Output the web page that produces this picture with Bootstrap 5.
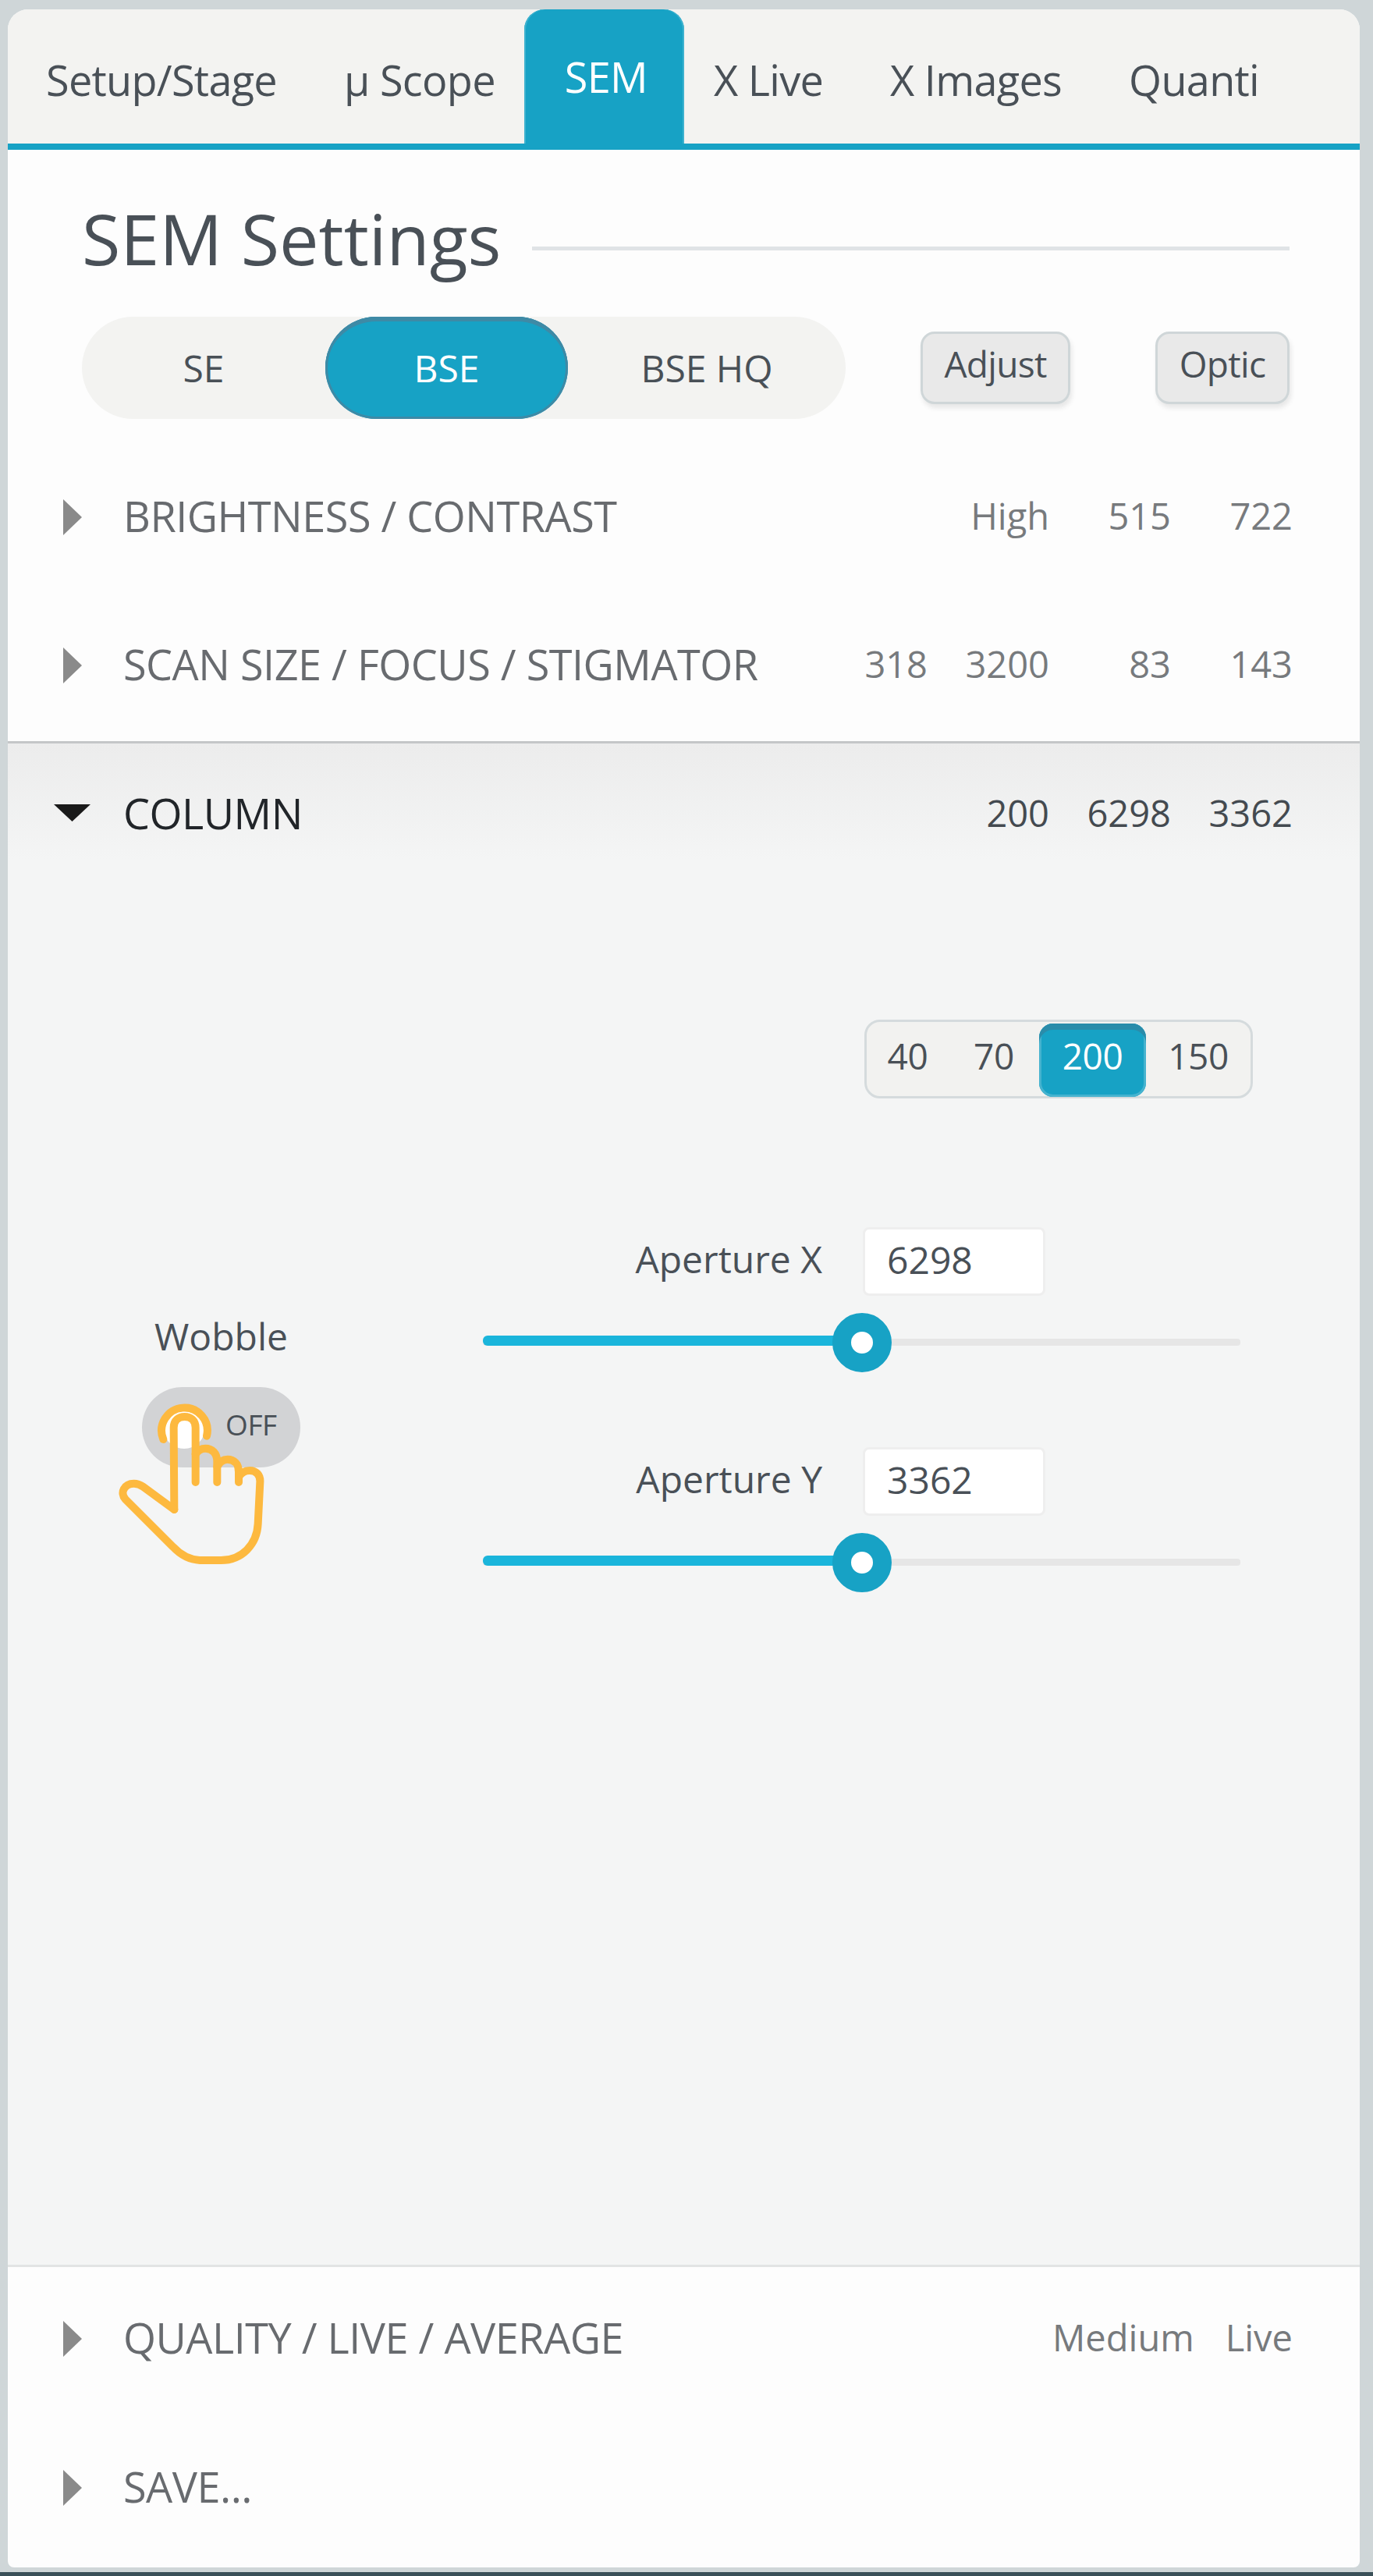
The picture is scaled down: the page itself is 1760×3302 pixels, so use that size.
<!DOCTYPE html>
<html lang="en">
<head>
    <meta charset="UTF-8">
    <title>SEM Settings</title>
    <link rel="stylesheet" href="https://cdn.jsdelivr.net/npm/bootstrap@5.3.0/dist/css/bootstrap.min.css">
    <style>
        body {
            background: #cfd6d8;
            font-family: "Open Sans", "Noto Sans", sans-serif;
            color: #495057;
            height: 3302px;
            overflow: hidden;
        }

        .sem-panel {
            margin: 12px 17px 0 10px;
            height: 3279px;
            background: #fdfdfd;
            border-radius: 26px 26px 8px 8px;
            overflow: hidden;
        }

        .bottom-band { height: 5px; margin-top: 6px; background: #3a5058; }

        /* tabs */
        .sem-tabs {
            height: 180px;
            padding-left: 6px;
            background: #f3f3f1;
            border-bottom: 8px solid #17a2c5;
            flex-wrap: nowrap;
            --bs-nav-tabs-border-width: 0;
        }
        .sem-tabs .nav-link {
            height: 172px;
            padding: 0 43px;
            margin: 0;
            border: 0;
            border-radius: 26px 26px 0 0;
            font-size: 54px;
            letter-spacing: -.7px;
            line-height: 172px;
            color: #495057;
            background: transparent;
            white-space: nowrap;
        }
        .sem-tabs .nav-link span { position: relative; top: 4px; }
        .sem-tabs .nav-link.active {
            color: #fff;
            background: #17a2c5;
            padding: 0 47px 0 52px;
            margin: 0 -5px 0 -6px;
            box-shadow: inset 2px 0 0 #3eb2cf, inset -2px 0 0 #3eb2cf;
        }
        .sem-tabs .nav-link.active span { top: 0; }

        /* title */
        .title-line { height: 214px; padding: 12px 90px 0 95px; }
        .title-line h2 {
            margin: 0;
            font-size: 90px;
            font-weight: 400;
            line-height: 1;
            color: #495057;
        }
        .title-rule { height: 5px; margin: 26px 0 0 40px; background: #e0e3e6; }

        /* SE / BSE pill */
        .mode-wrap { height: 131px; padding: 0 90px 0 95px; }
        .mode-pill {
            width: 979px;
            height: 131px;
            background: #f3f3f1;
            border-radius: 66px;
        }
        .mode-pill .btn {
            border: 0;
            border-radius: 66px;
            padding: 0;
            font-size: 48px;
            color: #495057;
            background: transparent;
        }
        .mode-pill .btn:nth-child(1) { width: 312px; }
        .mode-pill .btn:nth-child(2) { width: 311px; }
        .mode-pill .btn:nth-child(3) { width: 356px; }
        .mode-pill .btn.active {
            color: #fff;
            background: #17a2c5;
            box-shadow: inset 0 6px 0 #3e8aa6, inset 0 0 0 3px #3e8aa6;
        }
        .soft-btn {
            height: 93px;
            padding: 0 0 10px;
            background: #e9e9e9;
            border: 3px solid #cfd6d8;
            border-radius: 18px;
            font-size: 46px;
            letter-spacing: -.7px;
            color: #495057;
            box-shadow: 2px 5px 6px rgba(0, 0, 0, .09);
        }
        .soft-btn:first-of-type { width: 192px; margin-left: 96px; }
        .soft-btn:last-of-type { width: 172px; margin-left: auto; }

        /* accordion rows */
        .acc-row { height: 190px; padding: 0 86px 0 0; font-size: 54px; color: #686b6f; letter-spacing: -.5px; }
        .acc-row.first-row { margin-top: 29px; }
        .acc-row.tight-row { height: 186px; padding-bottom: 6px; }
        .acc-row.open-row { height: 178px; color: #212529; }
        .acc-caret { width: 148px; flex: none; padding: 4px 0 0 71px; }
        .open-row .acc-caret { padding: 0 0 0 59px; }
        .acc-caret svg { display: block; }
        .acc-vals { margin-left: auto; font-size: 47px; letter-spacing: 0; color: #777a7d; }
        .acc-vals span { width: 156px; text-align: right; }
        .acc-vals span:first-child { width: auto; }
        .open-row .acc-vals { color: #444a50; }
        .acc-vals.loose span { width: auto; margin-left: 40px; }

        /* open section */
        .column-section {
            height: 1956px;
            margin-top: 4px;
            border-top: 3px solid #c4c6c8;
            border-bottom: 3px solid #e2e4e4;
            background: linear-gradient(#ececec, #f4f5f5 150px);
        }
        .kv-group {
            width: 498px;
            height: 101px;
            margin: 176px 137px 0 auto;
            padding: 2px 0 0 0;
            background: #f2f2f0;
            border: 3px solid #d5dbdd;
            border-radius: 20px;
        }
        .kv-group .btn {
            flex: none;
            height: 94px;
            margin: 0 !important;
            padding: 0 0 12px;
            border: 0;
            font-size: 46px;
            letter-spacing: -.4px;
            color: #495057;
            background: transparent;
            border-radius: 18px !important;
        }
        .kv-group .btn:nth-child(1) { width: 105px; }
        .kv-group .btn:nth-child(2) { width: 116px; }
        .kv-group .btn:nth-child(3) { width: 137px; }
        .kv-group .btn:nth-child(4) { width: 134px; }
        .kv-group .btn.active {
            color: #fff;
            background: #17a2c5;
            box-shadow: inset 0 8px 0 #2a8caa, inset 0 0 0 3px #46b3cf;
        }

        .wobble-side { width: 203px; margin: 275px 0 0 172px; flex: none; text-align: center; font-size: 48px; line-height: 60px; }
        .wobble-toggle {
            position: relative;
            height: 103px;
            margin-top: 35px;
            background: #d2d3d5;
            border-radius: 52px;
        }
        .wobble-knob {
            width: 54px;
            height: 54px;
            margin: 25px 0 0 27px;
            background: #fff;
            border-radius: 50%;
            flex: none;
        }
        .wobble-off { margin-left: 26px; font-size: 37px; letter-spacing: -.4px; line-height: 95px; }
        .hand-icon { position: absolute; left: -62px; top: -118px; width: 300px; height: 360px; }

        .aperture-side { width: 971px; margin: 0 0 0 234px; padding-top: 165px; flex: none; }
        .aperture-line { height: 88px; font-size: 48px; }
        .aperture-line .form-control {
            width: 234px;
            height: 88px;
            margin-left: 52px;
            padding: 0 28px 6px;
            background: #fff;
            border: 3px solid #eeeeee;
            border-radius: 8px;
            font-size: 48px;
            color: #495057;
        }
        .aperture-label { width: 435px; text-align: right; padding-bottom: 6px; }
        .slide-track {
            position: relative;
            height: 9px;
            margin: 55px 0 130px;
            background: #e6e6e6;
            border-radius: 4px;
        }
        .slide-fill { position: absolute; left: 0; top: -4px; height: 13px; background: #1ab5db; border-radius: 6px 0 0 6px; }
        .slide-thumb {
            position: absolute;
            top: -33px;
            width: 76px;
            height: 76px;
            margin-left: -38px;
            background: #fff;
            border: 24px solid #17a2c5;
            border-radius: 50%;
        }
    </style>
</head>
<body>
    <div class="sem-panel">
        <ul class="nav nav-tabs sem-tabs">
            <li class="nav-item"><a class="nav-link" href="#"><span>Setup/Stage</span></a></li>
            <li class="nav-item"><a class="nav-link" href="#"><span>µ Scope</span></a></li>
            <li class="nav-item"><a class="nav-link active" href="#"><span>SEM</span></a></li>
            <li class="nav-item"><a class="nav-link" href="#"><span>X Live</span></a></li>
            <li class="nav-item"><a class="nav-link" href="#"><span>X Images</span></a></li>
            <li class="nav-item"><a class="nav-link" href="#"><span>Quanti</span></a></li>
        </ul>

        <div class="title-line d-flex align-items-center">
            <h2>SEM Settings</h2>
            <div class="title-rule flex-grow-1"></div>
        </div>

        <div class="mode-wrap d-flex align-items-center">
            <div class="mode-pill d-flex">
                <button class="btn" type="button">SE</button>
                <button class="btn active" type="button">BSE</button>
                <button class="btn" type="button">BSE HQ</button>
            </div>
            <button class="btn soft-btn" type="button">Adjust</button>
            <button class="btn soft-btn" type="button">Optic</button>
        </div>

        <div class="acc-row first-row d-flex align-items-center">
            <div class="acc-caret"><svg width="24" height="46" viewBox="0 0 24 46"><path d="M0 0L24 23L0 46Z" fill="#8a8a8a"/></svg></div>
            <div>BRIGHTNESS / CONTRAST</div>
            <div class="acc-vals d-flex"><span>High</span><span>515</span><span>722</span></div>
        </div>
        <div class="acc-row d-flex align-items-center">
            <div class="acc-caret"><svg width="24" height="46" viewBox="0 0 24 46"><path d="M0 0L24 23L0 46Z" fill="#8a8a8a"/></svg></div>
            <div>SCAN SIZE / FOCUS / STIGMATOR</div>
            <div class="acc-vals d-flex"><span>318</span><span>3200</span><span>83</span><span>143</span></div>
        </div>

        <div class="column-section">
            <div class="acc-row open-row d-flex align-items-center">
                <div class="acc-caret"><svg width="47" height="22" viewBox="0 0 47 22"><path d="M0 0H47L23.500 22Z" fill="#1a1a1a"/></svg></div>
                <div>COLUMN</div>
                <div class="acc-vals d-flex"><span>200</span><span>6298</span><span>3362</span></div>
            </div>

            <div class="btn-group kv-group d-flex" role="group">
                <button class="btn" type="button">40</button>
                <button class="btn" type="button">70</button>
                <button class="btn active" type="button">200</button>
                <button class="btn" type="button">150</button>
            </div>

            <div class="d-flex">
                <div class="wobble-side">
                    <div>Wobble</div>
                    <div class="wobble-toggle d-flex">
                        <div class="wobble-knob"></div>
                        <div class="wobble-off">OFF</div>
                        <svg class="hand-icon" viewBox="0 0 900 1080" fill="none" stroke="#fdb93f" stroke-width="30" stroke-linecap="round" stroke-linejoin="round">
                            <path d="M268 555A88 88 0 1 1 435 542"/>
                            <path d="M310 825L308 510C308 482 327 468 350 468C373 468 392 482 392 510V720"/>
                            <path d="M392 612C402 596 415 590 430 590C455 590 475 608 475 640V720"/>
                            <path d="M475 660C485 640 498 632 515 632C540 632 558 650 558 680V720"/>
                            <path d="M558 700C568 682 582 675 600 675C625 675 642 692 640 720L632 880C628 960 570 1020 490 1020H415C370 1020 335 1000 305 968L122 785C100 760 118 725 155 725C170 725 180 730 190 737L310 825"/>
                        </svg>
                    </div>
                </div>
                <div class="aperture-side">
                    <div class="aperture-line d-flex align-items-center">
                        <div class="aperture-label">Aperture X</div>
                        <input class="form-control" type="text" value="6298">
                    </div>
                    <div class="slide-track">
                        <div class="slide-fill" style="width: 50%"></div>
                        <div class="slide-thumb" style="left: 50%"></div>
                    </div>
                    <div class="aperture-line d-flex align-items-center">
                        <div class="aperture-label">Aperture Y</div>
                        <input class="form-control" type="text" value="3362">
                    </div>
                    <div class="slide-track">
                        <div class="slide-fill" style="width: 50%"></div>
                        <div class="slide-thumb" style="left: 50%"></div>
                    </div>
                </div>
            </div>
        </div>

        <div class="acc-row tight-row d-flex align-items-center">
            <div class="acc-caret"><svg width="24" height="46" viewBox="0 0 24 46"><path d="M0 0L24 23L0 46Z" fill="#8a8a8a"/></svg></div>
            <div>QUALITY / LIVE / AVERAGE</div>
            <div class="acc-vals loose d-flex"><span>Medium</span><span>Live</span></div>
        </div>
        <div class="acc-row d-flex align-items-center">
            <div class="acc-caret"><svg width="24" height="46" viewBox="0 0 24 46"><path d="M0 0L24 23L0 46Z" fill="#8a8a8a"/></svg></div>
            <div>SAVE...</div>
        </div>
    </div>
    <div class="bottom-band"></div>

    <script src="https://cdn.jsdelivr.net/npm/bootstrap@5.3.0/dist/js/bootstrap.bundle.min.js"></script>
</body>
</html>
